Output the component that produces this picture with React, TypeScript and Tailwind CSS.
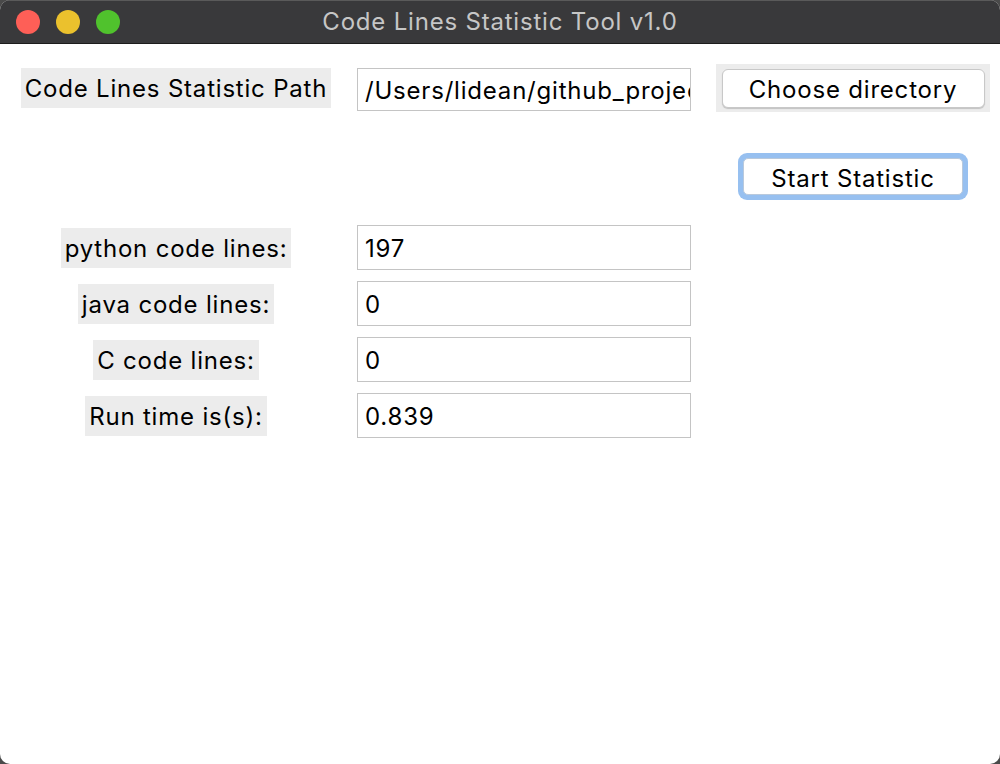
import React from "react";

const FONT = "font-['Inter','Liberation_Sans',sans-serif] tracking-[0.8px]";

const ROWS = [
  { label: "python code lines:", value: "197" },
  { label: "java code lines:", value: "0" },
  { label: "C code lines:", value: "0" },
  { label: "Run time is(s):", value: "0.839" },
];

function Label({ children }: { children: React.ReactNode }) {
  return (
    <div className="justify-self-center h-[40px] px-[4px] pt-[2px] bg-[#ececec] flex items-center text-[24px] text-black whitespace-nowrap">
      {children}
    </div>
  );
}

function Field({ value, height }: { value: string; height: string }) {
  return (
    <div
      className={`${height} w-[334px] border border-[#c4c4c4] bg-white pl-[7px] pt-[2px] flex items-center overflow-hidden whitespace-nowrap text-[24px] text-black`}
    >
      {value}
    </div>
  );
}

export default function App() {
  return (
    <div className={`w-[1000px] h-[764px] bg-[#4a4a4a] ${FONT}`}>
      <div className="h-full rounded-[10px] overflow-hidden bg-white flex flex-col">
        {/* Title bar */}
        <div className="h-[44px] shrink-0 bg-[#39393b] border-b border-[#1c1c1c] border-t border-t-[#5a5a5a] relative flex items-center justify-center">
          <div className="absolute left-[16px] top-[9px] flex gap-[16px]">
            <span className="w-[24px] h-[24px] rounded-full bg-[#fe5f57]" />
            <span className="w-[24px] h-[24px] rounded-full bg-[#ebc12d]" />
            <span className="w-[24px] h-[24px] rounded-full bg-[#50c22d]" />
          </div>
          <span className="text-[24px] text-[#c6c6c6]">Code Lines Statistic Tool v1.0</span>
        </div>

        {/* Form */}
        <div className="pl-[20px] pt-[20px] flex flex-col">
          <div className="grid grid-cols-[312px_334px_274px] gap-x-[25px] items-center h-[48px]">
            <Label>Code Lines Statistic Path</Label>
            <div className="mt-[3px]">
              <Field value="/Users/lidean/github_project" height="h-[43px]" />
            </div>
            <div className="h-[48px] bg-[#ececec] flex items-center justify-center">
              <button className="w-[263px] h-[39px] pt-[2px] rounded-[6px] bg-white border border-[#c8c8c8] shadow-[0_1px_1px_rgba(0,0,0,0.18)] text-[24px] text-black">
                Choose directory
              </button>
            </div>
          </div>

          <div className="grid grid-cols-[312px_334px_274px] gap-x-[25px] items-center h-[47px] mt-[41px]">
            <div />
            <div />
            <div className="justify-self-center w-[230px] h-[47px] rounded-[9px] bg-[#97c0f0] p-[5px]">
              <button className="w-full h-full pt-[2px] rounded-[5px] bg-white border border-[#b9c9dc] text-[24px] text-black">
                Start Statistic
              </button>
            </div>
          </div>

          <div className="flex flex-col gap-[11px] mt-[25px]">
            {ROWS.map((r) => (
              <div
                key={r.label}
                className="grid grid-cols-[312px_334px_274px] gap-x-[25px] items-center h-[45px]"
              >
                <Label>{r.label}</Label>
                <Field value={r.value} height="h-[45px]" />
                <div />
              </div>
            ))}
          </div>
        </div>
      </div>
    </div>
  );
}
